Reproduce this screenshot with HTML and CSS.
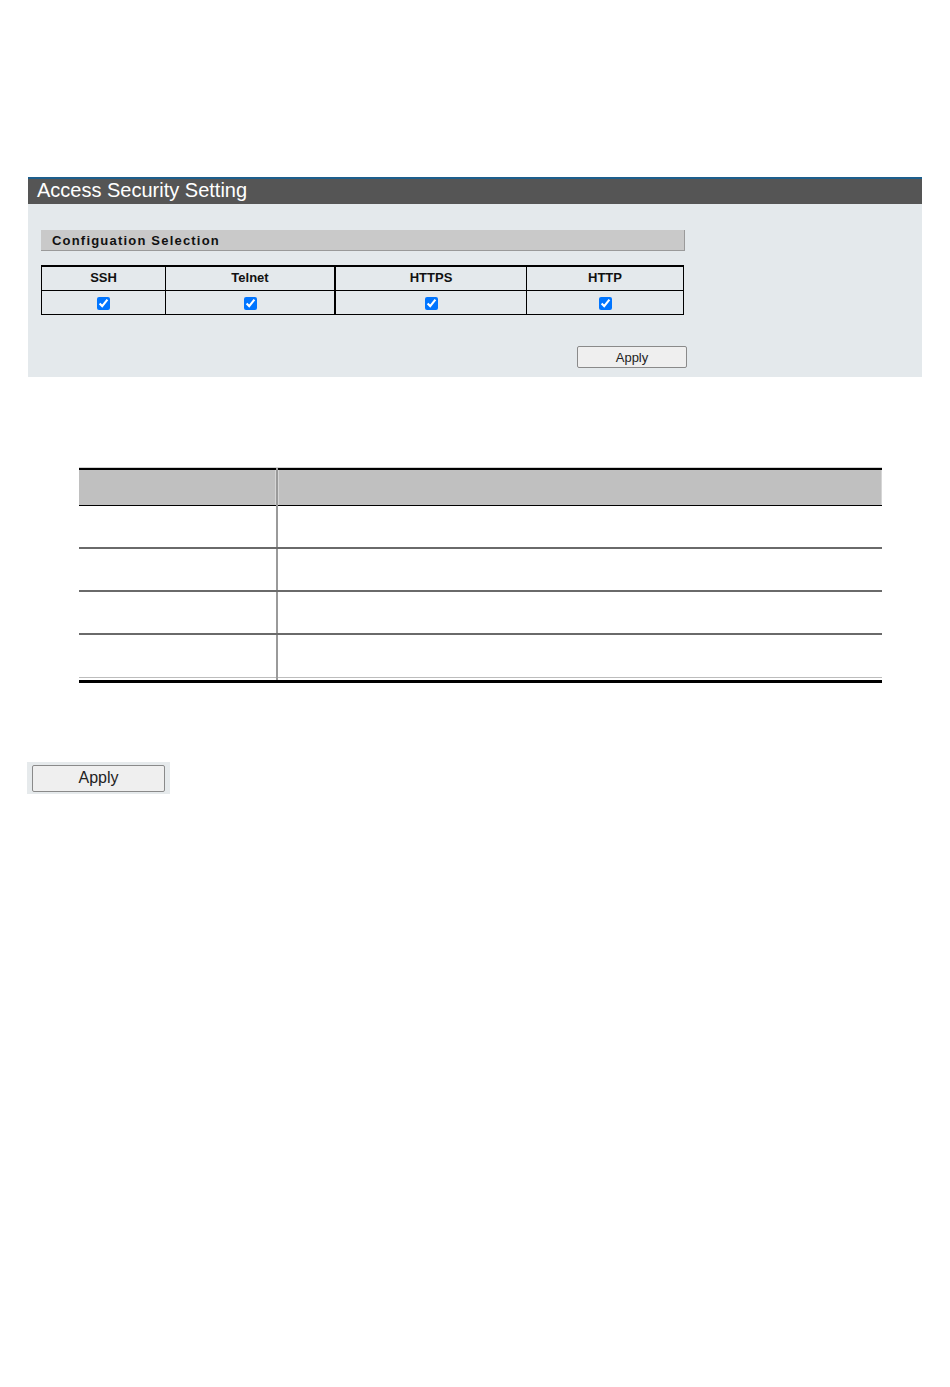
FILE: index.html
```html
<!DOCTYPE html>
<html lang="en">
<head>
    <meta charset="UTF-8">
    <title>Access Security Setting</title>
    <link rel="stylesheet" href="styles.css">
</head>
<body>

<div class="panel">
    <div class="panel-title">Access Security Setting</div>
    <div class="panel-body">
        <div class="section-bar">Configuation Selection</div>
        <table class="access-table">
            <tr>
                <th class="c-ssh">SSH</th>
                <th class="c-telnet">Telnet</th>
                <th class="c-https">HTTPS</th>
                <th class="c-http">HTTP</th>
            </tr>
            <tr>
                <td><input type="checkbox" checked></td>
                <td><input type="checkbox" checked></td>
                <td><input type="checkbox" checked></td>
                <td><input type="checkbox" checked></td>
            </tr>
        </table>
        <div class="panel-actions">
            <button class="btn-small">Apply</button>
        </div>
    </div>
</div>

<table class="desc-table">
    <tr class="desc-head">
        <th class="d-name"></th>
        <th class="d-text"></th>
    </tr>
    <tr><td></td><td></td></tr>
    <tr><td></td><td></td></tr>
    <tr><td></td><td></td></tr>
    <tr class="last"><td></td><td></td></tr>
</table>

<div class="apply-box">
    <button class="btn-big">Apply</button>
</div>

</body>
</html>
```

FILE: styles.css
```css
body {
    margin: 0;
    background: #ffffff;
    font-family: "Liberation Sans", Arial, sans-serif;
}
.panel {
    margin: 177px 0 0 28px;
    width: 894px;
    background: #e4e9ec;
}
.panel-title {
    height: 25px;
    border-top: 2px solid #1d5e8c;
    background: #555555;
    color: #ffffff;
    font-size: 20px;
    line-height: 23px;
    padding-left: 9px;
}
.panel-body {
    padding: 26px 0 9px 13px;
}
.section-bar {
    width: 632px;
    height: 20px;
    padding-left: 11px;
    background: #c9c9c9;
    border-right: 1px solid #9a9a9a;
    border-bottom: 1px solid #9a9a9a;
    font-size: 13px;
    font-weight: bold;
    letter-spacing: 1.2px;
    line-height: 21px;
    color: #111;
}
.access-table {
    margin-top: 14px;
    width: 643px;
    border-collapse: collapse;
    border-top: 2px solid #000;
}
.access-table th,
.access-table td {
    border: 1px solid #000;
    height: 23px;
    padding: 0;
    text-align: center;
}
.access-table th {
    font-size: 13px;
    font-weight: bold;
    color: #111;
    padding-bottom: 2px;
    height: 21px;
}
.access-table input {
    margin: 0;
    width: 13px;
    height: 13px;
    vertical-align: middle;
}
.access-table .c-ssh { width: 123px; }
.access-table .c-telnet { width: 168px; }
.access-table .c-https { width: 190px; }
.access-table th:nth-child(2),
.access-table td:nth-child(2) {
    border-right: 2px solid #000;
}
.panel-actions {
    margin-top: 31px;
    padding-left: 536px;
}
.btn-small {
    width: 110px;
    height: 22px;
    border: 1px solid #8a8a8a;
    border-radius: 2px;
    background: #efefef;
    font-family: "Liberation Sans", Arial, sans-serif;
    font-size: 13px;
    color: #222;
    padding: 0;
}
.desc-table {
    margin: 91px 0 0 79px;
    width: 803px;
    border-collapse: collapse;
    box-shadow: 0 -1px 0 #d0d0d0;
}
.desc-head th {
    height: 35px;
    padding: 0;
    background: #c0c0c0;
    border-top: 2px solid #000;
    border-bottom: 1px solid #000;
}
.desc-head .d-name {
    width: 197px;
    border-right: 2px solid #9a9a9a;
    box-shadow: inset -9px 0 0 -8px #d6d6d6;
}
.desc-head .d-text {
    box-shadow: inset 9px 0 0 -8px #d6d6d6, inset -10px 0 0 -9px #d6d6d6;
}
.desc-table td {
    height: 41px;
    padding: 0;
    border-bottom: 2px solid #6a6a6a;
}
.desc-table td:first-child {
    border-right: 2px solid #9a9a9a;
}
.desc-table tr.last td {
    border-bottom: 3px solid #000;
    box-shadow: inset 0 -2px 0 #fff, inset 0 -3px 0 #bdbdbd;
    height: 45px;
}
.apply-box {
    margin: 79px 0 0 27px;
    width: 143px;
    height: 32px;
    background: #e6eaec;
    display: flex;
    align-items: center;
    justify-content: center;
}
.btn-big {
    width: 133px;
    height: 27px;
    border: 1px solid #8a8a8a;
    border-radius: 2px;
    background: #efefef;
    font-family: "Liberation Sans", Arial, sans-serif;
    font-size: 16px;
    color: #222;
    padding: 0;
}
```
